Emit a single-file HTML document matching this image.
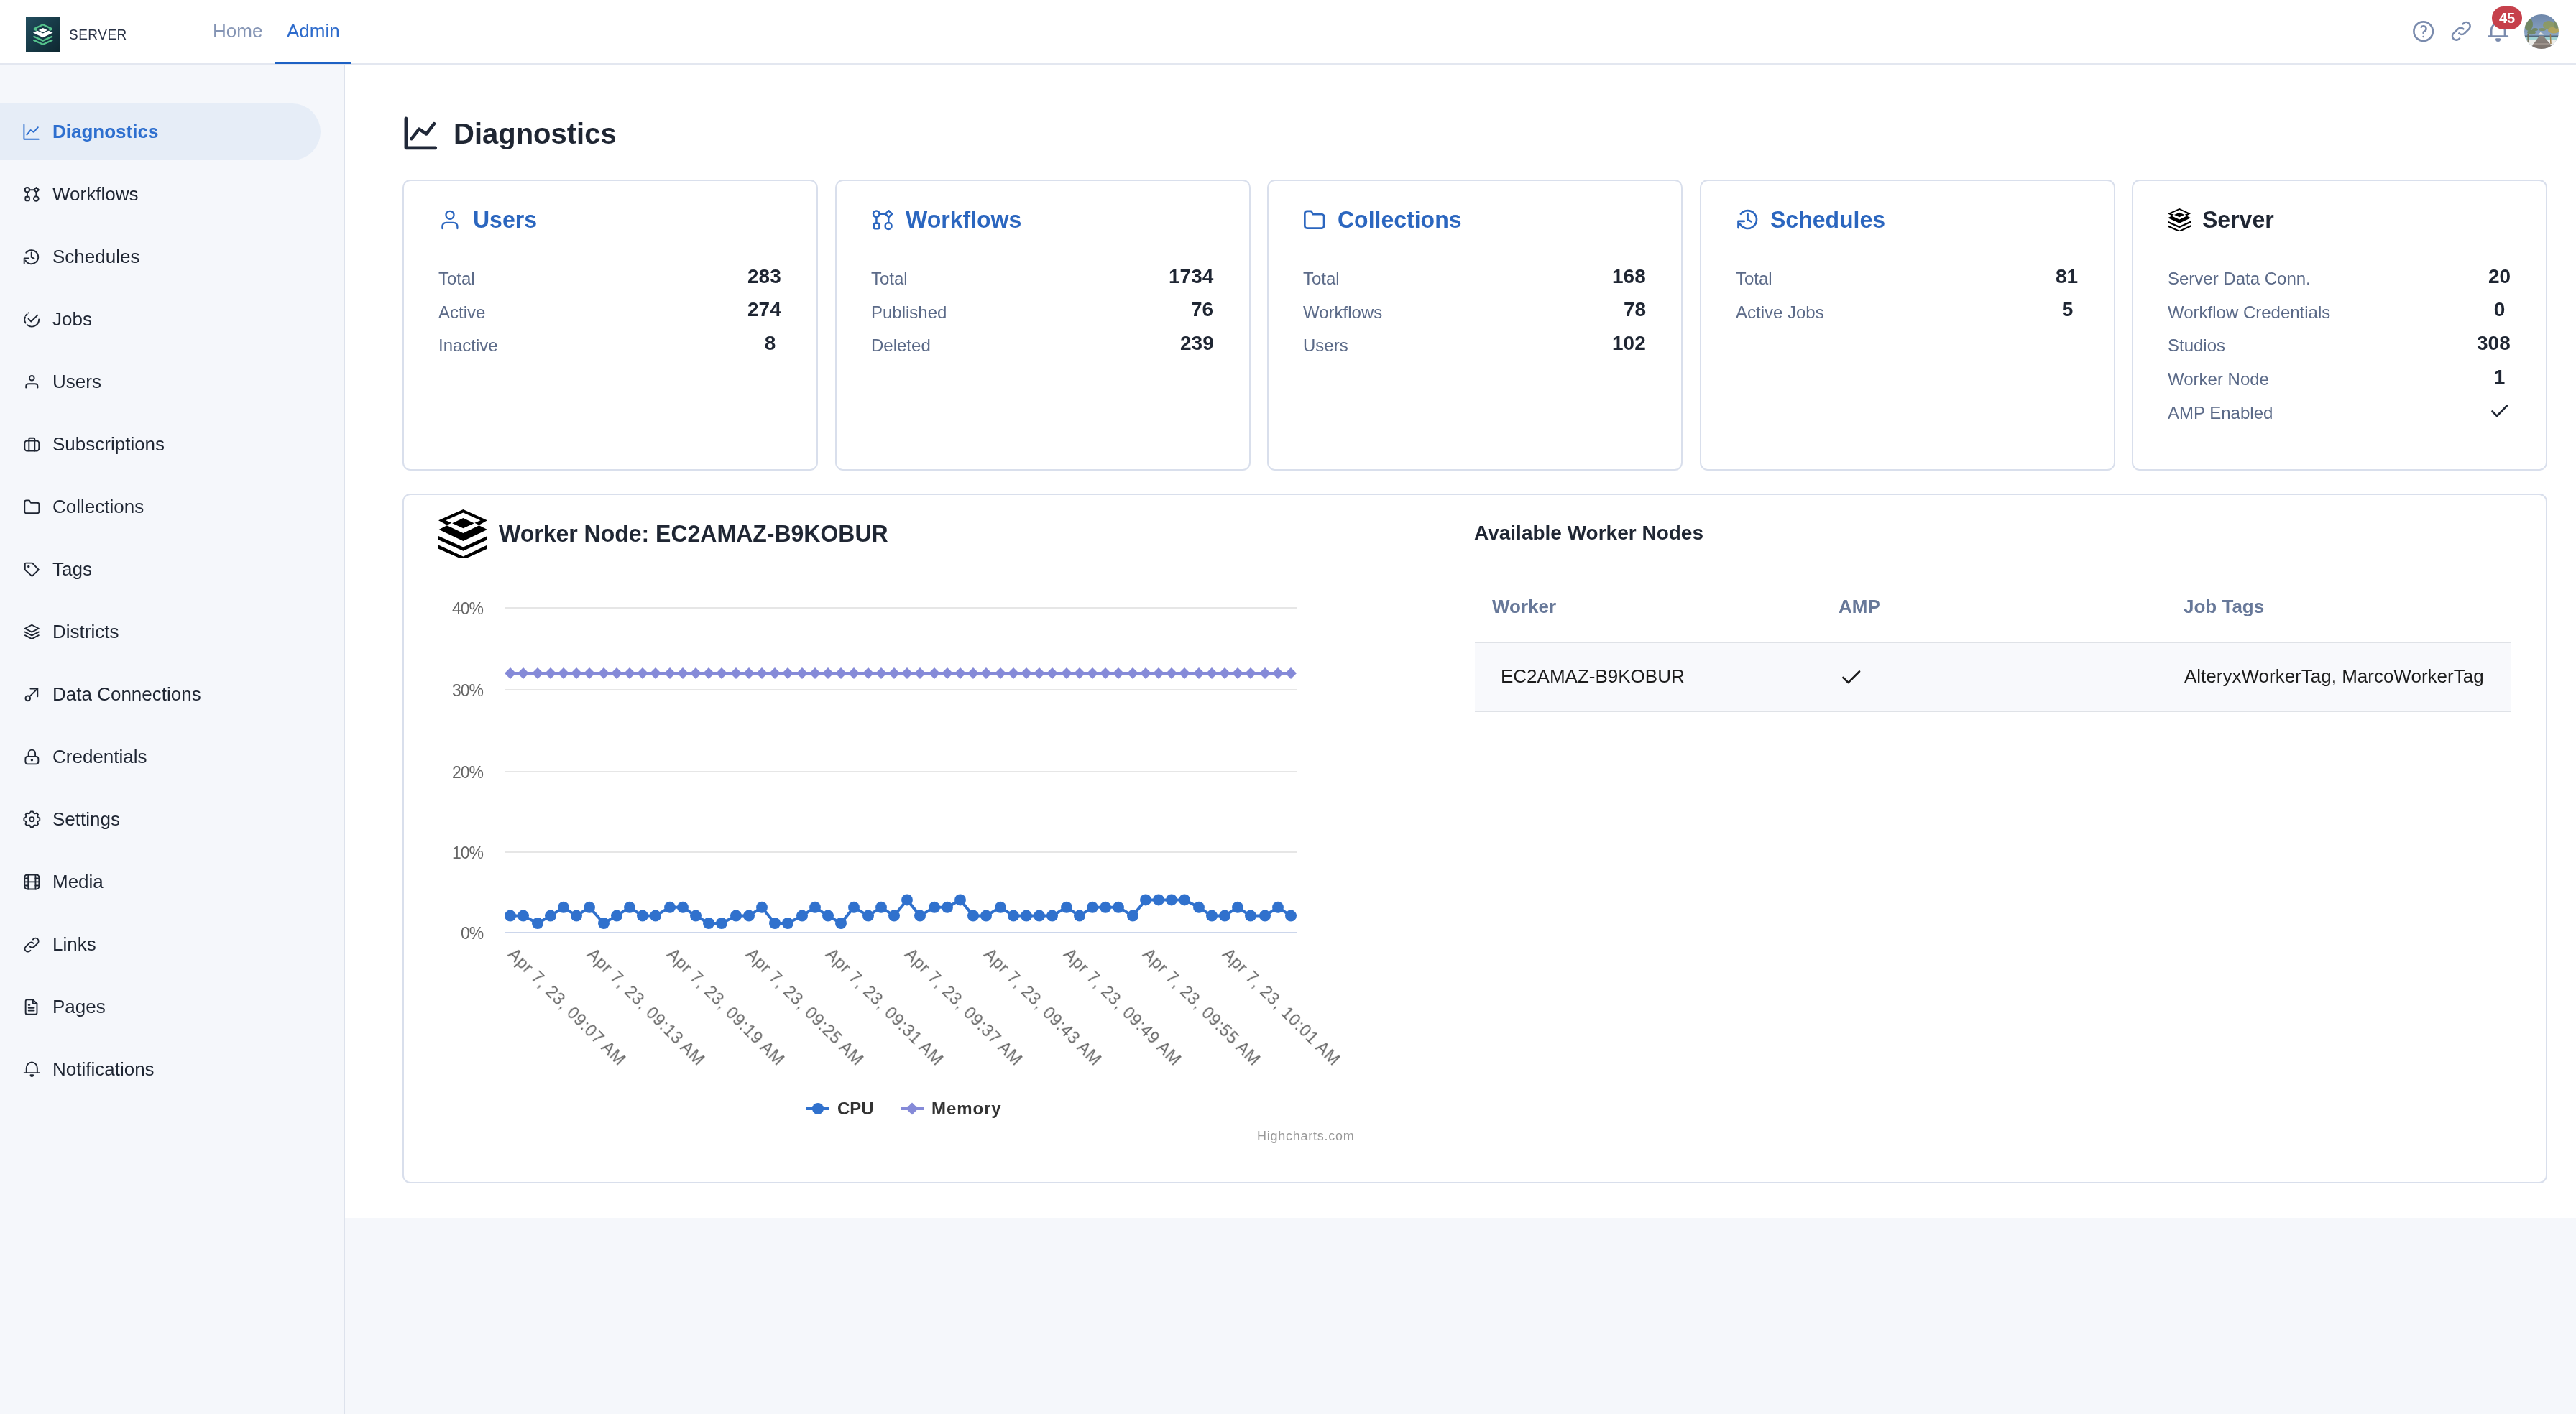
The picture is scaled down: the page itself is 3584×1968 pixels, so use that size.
<!DOCTYPE html>
<html><head><meta charset="utf-8"><title>Diagnostics</title>
<style>
html,body{margin:0;padding:0}
body{width:3584px;height:1968px;position:relative;overflow:hidden;background:#f5f7fb;font-family:"Liberation Sans",sans-serif}
@media (max-width:2600px){html{zoom:0.5}}
.t{position:absolute;white-space:nowrap;will-change:transform}
.r{position:absolute;display:block}
</style></head><body>

<div class="r" style="left:0px;top:0px;width:3584px;height:88px;background:#ffffff"></div>
<div class="r" style="left:0px;top:88px;width:3584px;height:2px;background:#e3e7f0"></div>
<div class="r" style="left:0px;top:90px;width:478px;height:1878px;background:#f5f7fb"></div>
<div class="r" style="left:478px;top:90px;width:2px;height:1878px;background:#dde2ec"></div>
<div class="r" style="left:480px;top:90px;width:3104px;height:1605px;background:#ffffff"></div>
<div class="r" style="left:36px;top:24px;width:48px;height:48px;background:linear-gradient(135deg,#224d5e 0%,#173a47 50%,#0e2730 100%)"></div>
<svg class="r" style="left:36px;top:24px;" width="48" height="48" viewBox="0 0 48 48">
<polygon points="10,21.6 23.8,15 37.6,21.6 23.8,28.2" fill="#ffffff"/>
<polygon points="11,16.2 23.8,10 36.6,16.2 23.8,22.6" fill="#173a47"/>
<polyline points="11.2,16.4 23.8,10.2 36.4,16.4" fill="none" stroke="#55c28c" stroke-width="2.3" stroke-linejoin="miter"/>
<polyline points="11.2,16.4 15,18.2" fill="none" stroke="#55c28c" stroke-width="2.3"/>
<polyline points="36.4,16.4 32.6,18.2" fill="none" stroke="#55c28c" stroke-width="2.3"/>
<polygon points="17.5,17.9 23.8,14.9 30.1,17.9 23.8,20.9" fill="#ffffff"/>
<polyline points="10.5,26.5 23.8,32.6 37.1,26.5" fill="none" stroke="#55c28c" stroke-width="2.4"/>
<polyline points="10.5,31.6 23.8,37.8 37.1,31.6" fill="none" stroke="#55c28c" stroke-width="2.4"/>
</svg>
<div class="t " style="left:96.00px;top:39.11px;font-size:19px;line-height:19px;color:#2a3346;font-weight:400;transform-origin:0 16.09px;transform:scaleY(1.02);letter-spacing:0.5px">SERVER</div>
<div class="t " style="left:296.00px;top:30.39px;font-size:26px;line-height:26px;color:#8494b4;font-weight:400;transform-origin:0 22.01px;transform:scaleY(1.02);">Home</div>
<div class="t " style="left:398.50px;top:30.39px;font-size:26px;line-height:26px;color:#2d6bcc;font-weight:400;transform-origin:0 22.01px;transform:scaleY(1.02);">Admin</div>
<div class="r" style="left:382px;top:86px;width:106px;height:3px;background:#1d61c4"></div>
<svg class="r" style="left:3354.36px;top:25.86px;" width="35.28" height="35.28" viewBox="0 0 24 24"><g fill="none" stroke="#7a8bad" stroke-width="1.769" stroke-linecap="round" stroke-linejoin="round" style="color:#7a8bad"><circle cx="12" cy="12" r="9"/><path d="M12 17l0 .01"/><path d="M12 13.5a1.5 1.5 0 0 1 1 -1.5a2.6 2.6 0 1 0 -3 -4"/></g></svg>
<svg class="r" style="left:3405.64px;top:25.14px;" width="36.72" height="36.72" viewBox="0 0 24 24"><g fill="none" stroke="#7a8bad" stroke-width="1.699" stroke-linecap="round" stroke-linejoin="round" style="color:#7a8bad"><path d="M10 14a3.5 3.5 0 0 0 5 0l4 -4a3.5 3.5 0 0 0 -5 -5l-.5 .5"/><path d="M14 10a3.5 3.5 0 0 0 -5 0l-4 4a3.5 3.5 0 0 0 5 5l.5 -.5"/></g></svg>
<svg class="r" style="left:3458.94px;top:28.44px;" width="33.12" height="33.12" viewBox="0 0 24 24"><g fill="none" stroke="#7a8bad" stroke-width="1.884" stroke-linecap="round" stroke-linejoin="round" style="color:#7a8bad"><path d="M5.2 16.3V10.3A6.8 7.2 0 0 1 18.8 10.3V16.3"/><path d="M2.4 16.3H21.6"/><path d="M10.4 19.2H13.6A1.6 1.6 0 0 1 10.4 19.2Z" fill="currentColor"/></g></svg>
<div class="r" style="left:3467px;top:9px;width:42px;height:32px;border-radius:16px;background:#c6404b"></div>
<div class="t " style="left:3488.00px;top:14.87px;font-size:20px;line-height:20px;color:#ffffff;font-weight:700;transform-origin:50% 16.93px;transform:translateX(-50%) scaleY(1.02);">45</div>
<svg class="r" style="left:3512px;top:20px;" width="48" height="48" viewBox="0 0 48 48">
<defs><clipPath id="avc"><circle cx="24" cy="24" r="24"/></clipPath>
<linearGradient id="avsky" x1="0" y1="0" x2="0" y2="1"><stop offset="0" stop-color="#6e87aa"/><stop offset="0.65" stop-color="#8ba6c6"/></linearGradient>
<linearGradient id="avpier" x1="0" y1="0" x2="0" y2="1"><stop offset="0" stop-color="#8d8580"/><stop offset="1" stop-color="#7c726c"/></linearGradient></defs>
<g clip-path="url(#avc)">
<rect x="0" y="0" width="48" height="48" fill="url(#avsky)"/>
<rect x="0" y="29.5" width="48" height="2.5" fill="#51687c"/>
<rect x="0" y="32" width="48" height="3" fill="#9fd2d2"/>
<rect x="0" y="35" width="48" height="13" fill="#ecedea"/>
<g fill="#6f8555" opacity="0.85"><ellipse cx="6" cy="14" rx="6" ry="9"/><ellipse cx="10" cy="25" rx="6" ry="3.2"/><ellipse cx="15" cy="21" rx="4" ry="2"/></g>
<rect x="4.4" y="28" width="1.5" height="12" fill="#6a6a55"/>
<g opacity="0.85"><ellipse cx="34" cy="15" rx="8" ry="6" fill="#8f9a5a"/><ellipse cx="41" cy="22" rx="8" ry="4.5" fill="#b9a54e"/><ellipse cx="25" cy="21" rx="5" ry="2" fill="#7f9060"/><ellipse cx="45" cy="14" rx="4" ry="6" fill="#7d8c58"/></g>
<path d="M35.6 27 L37 27 L37.8 41 L36.2 41Z" fill="#a0804e"/>
<path d="M19.6 28.4 L23.2 24 L27 28.4Z" fill="#e6e4dc"/>
<path d="M21 30 L26.5 30 L42 48 L8 48Z" fill="url(#avpier)"/>
<path d="M14 40 L34 40 L36 42 L12 42Z" fill="#9c918a"/>
</g></svg>
<div class="r" style="left:0px;top:144px;width:446px;height:79px;background:#e6edf7;border-radius:0 40px 40px 0"></div>
<div class="t " style="left:72.50px;top:170.19px;font-size:26px;line-height:26px;color:#2e6fcf;font-weight:700;transform-origin:0 22.01px;transform:scaleY(1.02);">Diagnostics</div>
<svg class="r" style="left:30.4px;top:170.1px;" width="27.19" height="27.19" viewBox="0 0 24 24"><g fill="none" stroke="#2e6fcf" stroke-width="1.677" stroke-linecap="round" stroke-linejoin="round" style="color:#2e6fcf"><path d="M3 3v18h18"/><path d="M6.5 15.5 L11.1 9.8 L15 12.2 L20.2 6.3"/></g></svg>
<div class="t " style="left:72.50px;top:257.19px;font-size:26px;line-height:26px;color:#1f2633;font-weight:400;transform-origin:0 22.01px;transform:scaleY(1.02);">Workflows</div>
<svg class="r" style="left:30.68px;top:257.38px;" width="26.64" height="26.64" viewBox="0 0 24 24"><g fill="none" stroke="#1f2633" stroke-width="1.712" stroke-linecap="round" stroke-linejoin="round" style="color:#1f2633"><circle cx="6.2" cy="6.5" r="2.85"/><path d="M17.7 3.5 L20.7 6.5 L17.7 9.5 L14.7 6.5Z"/><path d="M9.05 6.5H14.7"/><path d="M6.3 9.35V15.1"/><path d="M17.5 9.5V14.6"/><rect x="3.9" y="15.1" width="5" height="5" rx="1"/><circle cx="17.4" cy="17.65" r="3"/></g></svg>
<div class="t " style="left:72.50px;top:344.19px;font-size:26px;line-height:26px;color:#1f2633;font-weight:400;transform-origin:0 22.01px;transform:scaleY(1.02);">Schedules</div>
<svg class="r" style="left:31.28px;top:344.98px;" width="25.44" height="25.44" viewBox="0 0 24 24"><g fill="none" stroke="#1f2633" stroke-width="1.792" stroke-linecap="round" stroke-linejoin="round" style="color:#1f2633"><path d="M5 6.34A9 9 0 1 1 4.2 16.5"/><path d="M2.54 20.36V13.7H8.48"/><path d="M12 6.2V12.2L15.6 14"/></g></svg>
<div class="t " style="left:72.50px;top:431.19px;font-size:26px;line-height:26px;color:#1f2633;font-weight:400;transform-origin:0 22.01px;transform:scaleY(1.02);">Jobs</div>
<svg class="r" style="left:30.68px;top:431.38px;" width="26.64" height="26.64" viewBox="0 0 24 24"><g fill="none" stroke="#1f2633" stroke-width="1.712" stroke-linecap="round" stroke-linejoin="round" style="color:#1f2633"><path d="M7.86 3.98 L7.9 3.96"/><path d="M4.37 7.53 A9 9 0 0 1 5.98 5.61"/><path d="M3.02 11.67 A9 9 0 0 1 3.54 9.22"/><path d="M4.13 16.66 A9 9 0 0 1 3.23 14.32"/><path d="M6.0 19.0 A9 9 0 0 0 20.9 12.2"/><path d="M7.7 11.4L11.1 14.9L19.2 6.9"/></g></svg>
<div class="t " style="left:72.50px;top:518.19px;font-size:26px;line-height:26px;color:#1f2633;font-weight:400;transform-origin:0 22.01px;transform:scaleY(1.02);">Users</div>
<svg class="r" style="left:30.68px;top:518.38px;" width="26.64" height="26.64" viewBox="0 0 24 24"><g fill="none" stroke="#1f2633" stroke-width="1.712" stroke-linecap="round" stroke-linejoin="round" style="color:#1f2633"><circle cx="12" cy="7.5" r="3"/><path d="M4.7 19.4V17.7C4.7 15.7 5.9 14.6 8.1 14.6H15.9C18.1 14.6 19.3 15.7 19.3 17.7V19.4"/></g></svg>
<div class="t " style="left:72.50px;top:605.19px;font-size:26px;line-height:26px;color:#1f2633;font-weight:400;transform-origin:0 22.01px;transform:scaleY(1.02);">Subscriptions</div>
<svg class="r" style="left:30.68px;top:605.38px;" width="26.64" height="26.64" viewBox="0 0 24 24"><g fill="none" stroke="#1f2633" stroke-width="1.712" stroke-linecap="round" stroke-linejoin="round" style="color:#1f2633"><rect x="3" y="7.6" width="18" height="12.7" rx="3"/><path d="M8.4 20.3V7.6"/><path d="M15.6 20.3V7.6"/><path d="M8.4 7.6V5.6A1.3 1.3 0 0 1 9.7 4.3H14.3A1.3 1.3 0 0 1 15.6 5.6V7.6"/></g></svg>
<div class="t " style="left:72.50px;top:692.19px;font-size:26px;line-height:26px;color:#1f2633;font-weight:400;transform-origin:0 22.01px;transform:scaleY(1.02);">Collections</div>
<svg class="r" style="left:30.68px;top:692.38px;" width="26.64" height="26.64" viewBox="0 0 24 24"><g fill="none" stroke="#1f2633" stroke-width="1.712" stroke-linecap="round" stroke-linejoin="round" style="color:#1f2633"><path d="M5.2 3.94H8.94L10.74 6.92H18.8Q21.05 6.92 21.05 9.17V17.8Q21.05 20.06 18.8 20.06H5.2Q2.95 20.06 2.95 17.8V6.2Q2.95 3.94 5.2 3.94Z"/></g></svg>
<div class="t " style="left:72.50px;top:779.19px;font-size:26px;line-height:26px;color:#1f2633;font-weight:400;transform-origin:0 22.01px;transform:scaleY(1.02);">Tags</div>
<svg class="r" style="left:30.68px;top:779.38px;" width="26.64" height="26.64" viewBox="0 0 24 24"><g fill="none" stroke="#1f2633" stroke-width="1.712" stroke-linecap="round" stroke-linejoin="round" style="color:#1f2633"><circle cx="7.9" cy="8.5" r=".7" fill="currentColor"/><path d="M3.4 5.2V12.6L12.2 20.6L20.6 12.6L12.6 4.2H4.4A1 1 0 0 0 3.4 5.2Z"/></g></svg>
<div class="t " style="left:72.50px;top:866.19px;font-size:26px;line-height:26px;color:#1f2633;font-weight:400;transform-origin:0 22.01px;transform:scaleY(1.02);">Districts</div>
<svg class="r" style="left:30.68px;top:866.38px;" width="26.64" height="26.64" viewBox="0 0 24 24"><g fill="none" stroke="#1f2633" stroke-width="1.712" stroke-linecap="round" stroke-linejoin="round" style="color:#1f2633"><path d="M12 3.4L20.6 7.9L12 12.2L3.4 7.9Z"/><path d="M3.4 12.2L12 16.6L20.6 12.2"/><path d="M3.4 16.4L12 20.8L20.6 16.4"/></g></svg>
<div class="t " style="left:72.50px;top:953.19px;font-size:26px;line-height:26px;color:#1f2633;font-weight:400;transform-origin:0 22.01px;transform:scaleY(1.02);">Data Connections</div>
<svg class="r" style="left:30.68px;top:953.38px;" width="26.64" height="26.64" viewBox="0 0 24 24"><g fill="none" stroke="#1f2633" stroke-width="1.712" stroke-linecap="round" stroke-linejoin="round" style="color:#1f2633"><circle cx="7" cy="17" r="3"/><path d="M9.2 14.8L19.2 4.9"/><path d="M10.3 4.9H19.2V14.6"/></g></svg>
<div class="t " style="left:72.50px;top:1040.19px;font-size:26px;line-height:26px;color:#1f2633;font-weight:400;transform-origin:0 22.01px;transform:scaleY(1.02);">Credentials</div>
<svg class="r" style="left:30.68px;top:1040.38px;" width="26.64" height="26.64" viewBox="0 0 24 24"><g fill="none" stroke="#1f2633" stroke-width="1.712" stroke-linecap="round" stroke-linejoin="round" style="color:#1f2633"><rect x="3.95" y="11.7" width="16.2" height="9.4" rx="2.8"/><circle cx="12.07" cy="16" r=".7" fill="currentColor"/><path d="M7.8 11.7V7.55A4.25 4.25 0 0 1 16.3 7.55V11.7"/></g></svg>
<div class="t " style="left:72.50px;top:1127.19px;font-size:26px;line-height:26px;color:#1f2633;font-weight:400;transform-origin:0 22.01px;transform:scaleY(1.02);">Settings</div>
<svg class="r" style="left:30.68px;top:1127.38px;" width="26.64" height="26.64" viewBox="0 0 24 24"><g fill="none" stroke="#1f2633" stroke-width="1.712" stroke-linecap="round" stroke-linejoin="round" style="color:#1f2633"><path d="M10.62 2.20 A9.9 9.9 0 0 1 13.38 2.20 Q14.45 6.09 17.96 4.09 A9.9 9.9 0 0 1 19.91 6.04 Q17.91 9.55 21.80 10.62 A9.9 9.9 0 0 1 21.80 13.38 Q17.91 14.45 19.91 17.96 A9.9 9.9 0 0 1 17.96 19.91 Q14.45 17.91 13.38 21.80 A9.9 9.9 0 0 1 10.62 21.80 Q9.55 17.91 6.04 19.91 A9.9 9.9 0 0 1 4.09 17.96 Q6.09 14.45 2.20 13.38 A9.9 9.9 0 0 1 2.20 10.62 Q6.09 9.55 4.09 6.04 A9.9 9.9 0 0 1 6.04 4.09 Q9.55 6.09 10.62 2.20Z"/><circle cx="12" cy="12" r="2.7"/></g></svg>
<div class="t " style="left:72.50px;top:1214.19px;font-size:26px;line-height:26px;color:#1f2633;font-weight:400;transform-origin:0 22.01px;transform:scaleY(1.02);">Media</div>
<svg class="r" style="left:30.68px;top:1214.38px;" width="26.64" height="26.64" viewBox="0 0 24 24"><g fill="none" stroke="#1f2633" stroke-width="1.712" stroke-linecap="round" stroke-linejoin="round" style="color:#1f2633"><rect x="2.95" y="3.1" width="18.1" height="18.1" rx="3.3"/><path d="M7.44 3.1V21.2"/><path d="M16.6 3.1V21.2"/><path d="M2.95 7.6H7.44"/><path d="M2.95 16.7H7.44"/><path d="M2.95 12.1H21.05"/><path d="M16.6 7.6H21.05"/><path d="M16.6 16.7H21.05"/></g></svg>
<div class="t " style="left:72.50px;top:1301.19px;font-size:26px;line-height:26px;color:#1f2633;font-weight:400;transform-origin:0 22.01px;transform:scaleY(1.02);">Links</div>
<svg class="r" style="left:29.84px;top:1300.54px;" width="28.32" height="28.32" viewBox="0 0 24 24"><g fill="none" stroke="#1f2633" stroke-width="1.610" stroke-linecap="round" stroke-linejoin="round" style="color:#1f2633"><path d="M10 14a3.5 3.5 0 0 0 5 0l4 -4a3.5 3.5 0 0 0 -5 -5l-.5 .5"/><path d="M14 10a3.5 3.5 0 0 0 -5 0l-4 4a3.5 3.5 0 0 0 5 5l.5 -.5"/></g></svg>
<div class="t " style="left:72.50px;top:1388.19px;font-size:26px;line-height:26px;color:#1f2633;font-weight:400;transform-origin:0 22.01px;transform:scaleY(1.02);">Pages</div>
<svg class="r" style="left:30.44px;top:1388.14px;" width="27.12" height="27.12" viewBox="0 0 24 24"><g fill="none" stroke="#1f2633" stroke-width="1.681" stroke-linecap="round" stroke-linejoin="round" style="color:#1f2633"><path d="M14 3v4a1 1 0 0 0 1 1h4"/><path d="M17 21h-10a2 2 0 0 1 -2 -2v-14a2 2 0 0 1 2 -2h7l5 5v11a2 2 0 0 1 -2 2z"/><path d="M8.6 9.6H10.1"/><path d="M8.6 13.06H15.5"/><path d="M8.6 16.47H15.5"/></g></svg>
<div class="t " style="left:72.50px;top:1475.19px;font-size:26px;line-height:26px;color:#1f2633;font-weight:400;transform-origin:0 22.01px;transform:scaleY(1.02);">Notifications</div>
<svg class="r" style="left:30.68px;top:1475.38px;" width="26.64" height="26.64" viewBox="0 0 24 24"><g fill="none" stroke="#1f2633" stroke-width="1.712" stroke-linecap="round" stroke-linejoin="round" style="color:#1f2633"><path d="M5.2 16.3V10.3A6.8 7.2 0 0 1 18.8 10.3V16.3"/><path d="M2.4 16.3H21.6"/><path d="M10.4 19.2H13.6A1.6 1.6 0 0 1 10.4 19.2Z" fill="currentColor"/></g></svg>
<svg class="r" style="left:557.7px;top:157.6px;" width="54.7" height="54.7" viewBox="0 0 24 24"><g fill="none" stroke="#202838" stroke-width="2" stroke-linecap="round" stroke-linejoin="round"><path d="M3 3v18h18"/><path d="M6.4 15.4 L11 9.5 L15.5 12.5 L20.2 6.2"/></g></svg>
<div class="t " style="left:630.50px;top:166.13px;font-size:40px;line-height:40px;color:#1f2633;font-weight:700;transform-origin:0 33.87px;transform:scaleY(1.02);">Diagnostics</div>
<div class="r" style="left:560.0px;top:250px;width:578px;height:405px;box-sizing:border-box;border:2px solid #d9dfec;border-radius:11px;background:#fff"></div>
<svg class="r" style="left:600.0px;top:280px;" width="60" height="50" viewBox="600 280 60 50"><g fill="none" stroke="#2b66bf" stroke-width="2.3" stroke-linecap="round" stroke-linejoin="round"><circle cx="626" cy="299.3" r="5.5"/><path d="M615.4 318V315.8C615.4 312.2 617.4 309.9 621.2 309.9H630.6C634.4 309.9 636.4 312.2 636.4 315.8V318"/></g></svg>
<div class="t " style="left:658.00px;top:290.41px;font-size:32px;line-height:32px;color:#2b66bf;font-weight:700;transform-origin:0 27.09px;transform:scaleY(1.02);">Users</div>
<div class="t " style="left:610.00px;top:375.88px;font-size:24px;line-height:24px;color:#5b6a88;font-weight:400;transform-origin:0 20.32px;transform:scaleY(1.02);">Total</div>
<div class="t " style="right:2497.00px;top:370.69px;font-size:28px;line-height:28px;color:#1f2633;font-weight:700;transform-origin:0 23.71px;transform:scaleY(1.02);min-width:31px;text-align:center">283</div>
<div class="t " style="left:610.00px;top:422.58px;font-size:24px;line-height:24px;color:#5b6a88;font-weight:400;transform-origin:0 20.32px;transform:scaleY(1.02);">Active</div>
<div class="t " style="right:2497.00px;top:417.39px;font-size:28px;line-height:28px;color:#1f2633;font-weight:700;transform-origin:0 23.71px;transform:scaleY(1.02);min-width:31px;text-align:center">274</div>
<div class="t " style="left:610.00px;top:469.28px;font-size:24px;line-height:24px;color:#5b6a88;font-weight:400;transform-origin:0 20.32px;transform:scaleY(1.02);">Inactive</div>
<div class="t " style="right:2497.00px;top:464.09px;font-size:28px;line-height:28px;color:#1f2633;font-weight:700;transform-origin:0 23.71px;transform:scaleY(1.02);min-width:31px;text-align:center">8</div>
<div class="r" style="left:1161.5px;top:250px;width:578px;height:405px;box-sizing:border-box;border:2px solid #d9dfec;border-radius:11px;background:#fff"></div>
<svg class="r" style="left:1210.0px;top:288.0px;" width="36.0" height="36.0" viewBox="0 0 24 24"><g fill="none" stroke="#2b66bf" stroke-width="1.667" stroke-linecap="round" stroke-linejoin="round" style="color:#2b66bf"><circle cx="6.2" cy="6.5" r="2.85"/><path d="M17.7 3.5 L20.7 6.5 L17.7 9.5 L14.7 6.5Z"/><path d="M9.05 6.5H14.7"/><path d="M6.3 9.35V15.1"/><path d="M17.5 9.5V14.6"/><rect x="3.9" y="15.1" width="5" height="5" rx="1"/><circle cx="17.4" cy="17.65" r="3"/></g></svg>
<div class="t " style="left:1259.50px;top:290.41px;font-size:32px;line-height:32px;color:#2b66bf;font-weight:700;transform-origin:0 27.09px;transform:scaleY(1.02);">Workflows</div>
<div class="t " style="left:1211.50px;top:375.88px;font-size:24px;line-height:24px;color:#5b6a88;font-weight:400;transform-origin:0 20.32px;transform:scaleY(1.02);">Total</div>
<div class="t " style="right:1895.50px;top:370.69px;font-size:28px;line-height:28px;color:#1f2633;font-weight:700;transform-origin:0 23.71px;transform:scaleY(1.02);min-width:31px;text-align:center">1734</div>
<div class="t " style="left:1211.50px;top:422.58px;font-size:24px;line-height:24px;color:#5b6a88;font-weight:400;transform-origin:0 20.32px;transform:scaleY(1.02);">Published</div>
<div class="t " style="right:1895.50px;top:417.39px;font-size:28px;line-height:28px;color:#1f2633;font-weight:700;transform-origin:0 23.71px;transform:scaleY(1.02);min-width:31px;text-align:center">76</div>
<div class="t " style="left:1211.50px;top:469.28px;font-size:24px;line-height:24px;color:#5b6a88;font-weight:400;transform-origin:0 20.32px;transform:scaleY(1.02);">Deleted</div>
<div class="t " style="right:1895.50px;top:464.09px;font-size:28px;line-height:28px;color:#1f2633;font-weight:700;transform-origin:0 23.71px;transform:scaleY(1.02);min-width:31px;text-align:center">239</div>
<div class="r" style="left:1763.0px;top:250px;width:578px;height:405px;box-sizing:border-box;border:2px solid #d9dfec;border-radius:11px;background:#fff"></div>
<svg class="r" style="left:1811.35px;top:288.2px;" width="35.4" height="35.4" viewBox="0 0 24 24"><g fill="none" stroke="#2b66bf" stroke-width="1.797" stroke-linecap="round" stroke-linejoin="round" style="color:#2b66bf"><path d="M5.2 3.94H8.94L10.74 6.92H18.8Q21.05 6.92 21.05 9.17V17.8Q21.05 20.06 18.8 20.06H5.2Q2.95 20.06 2.95 17.8V6.2Q2.95 3.94 5.2 3.94Z"/></g></svg>
<div class="t " style="left:1861.00px;top:290.41px;font-size:32px;line-height:32px;color:#2b66bf;font-weight:700;transform-origin:0 27.09px;transform:scaleY(1.02);">Collections</div>
<div class="t " style="left:1813.00px;top:375.88px;font-size:24px;line-height:24px;color:#5b6a88;font-weight:400;transform-origin:0 20.32px;transform:scaleY(1.02);">Total</div>
<div class="t " style="right:1294.00px;top:370.69px;font-size:28px;line-height:28px;color:#1f2633;font-weight:700;transform-origin:0 23.71px;transform:scaleY(1.02);min-width:31px;text-align:center">168</div>
<div class="t " style="left:1813.00px;top:422.58px;font-size:24px;line-height:24px;color:#5b6a88;font-weight:400;transform-origin:0 20.32px;transform:scaleY(1.02);">Workflows</div>
<div class="t " style="right:1294.00px;top:417.39px;font-size:28px;line-height:28px;color:#1f2633;font-weight:700;transform-origin:0 23.71px;transform:scaleY(1.02);min-width:31px;text-align:center">78</div>
<div class="t " style="left:1813.00px;top:469.28px;font-size:24px;line-height:24px;color:#5b6a88;font-weight:400;transform-origin:0 20.32px;transform:scaleY(1.02);">Users</div>
<div class="t " style="right:1294.00px;top:464.09px;font-size:28px;line-height:28px;color:#1f2633;font-weight:700;transform-origin:0 23.71px;transform:scaleY(1.02);min-width:31px;text-align:center">102</div>
<div class="r" style="left:2364.5px;top:250px;width:578px;height:405px;box-sizing:border-box;border:2px solid #d9dfec;border-radius:11px;background:#fff"></div>
<svg class="r" style="left:2414.94px;top:289.44px;" width="33.12" height="33.12" viewBox="0 0 24 24"><g fill="none" stroke="#2b66bf" stroke-width="1.920" stroke-linecap="round" stroke-linejoin="round" style="color:#2b66bf"><path d="M5 6.34A9 9 0 1 1 4.2 16.5"/><path d="M2.54 20.36V13.7H8.48"/><path d="M12 6.2V12.2L15.6 14"/></g></svg>
<div class="t " style="left:2462.50px;top:290.41px;font-size:32px;line-height:32px;color:#2b66bf;font-weight:700;transform-origin:0 27.09px;transform:scaleY(1.02);">Schedules</div>
<div class="t " style="left:2414.50px;top:375.88px;font-size:24px;line-height:24px;color:#5b6a88;font-weight:400;transform-origin:0 20.32px;transform:scaleY(1.02);">Total</div>
<div class="t " style="right:692.50px;top:370.69px;font-size:28px;line-height:28px;color:#1f2633;font-weight:700;transform-origin:0 23.71px;transform:scaleY(1.02);min-width:31px;text-align:center">81</div>
<div class="t " style="left:2414.50px;top:422.58px;font-size:24px;line-height:24px;color:#5b6a88;font-weight:400;transform-origin:0 20.32px;transform:scaleY(1.02);">Active Jobs</div>
<div class="t " style="right:692.50px;top:417.39px;font-size:28px;line-height:28px;color:#1f2633;font-weight:700;transform-origin:0 23.71px;transform:scaleY(1.02);min-width:31px;text-align:center">5</div>
<div class="r" style="left:2966.0px;top:250px;width:578px;height:405px;box-sizing:border-box;border:2px solid #d9dfec;border-radius:11px;background:#fff"></div>
<svg class="r" style="left:3016.0px;top:290px;" width="32" height="32" viewBox="0 0 100 100"><g fill="#000000"><polygon points="0,22.5 50.7,0 100,22.5 83.1,31.9 74,27.6 86,22.5 50.7,6.6 15,22.5 27,27.6 17.4,31.9"/><polygon points="28.2,28.2 50.7,17.8 73.2,28.2 50.7,38.6"/><polygon points="1,41.3 17.4,32.6 50.7,48.4 83.1,32.6 100,41.3 50.7,64.8"/><polygon points="0,54.5 50.7,77.2 100,54.5 100,62.2 50.7,85 0,62.2"/><polygon points="0,72.8 50.7,96.2 100,72.8 100,80.6 57,100 44,100 0,80.6"/></g></svg>
<div class="t " style="left:3064.00px;top:290.41px;font-size:32px;line-height:32px;color:#1f2633;font-weight:700;transform-origin:0 27.09px;transform:scaleY(1.02);">Server</div>
<div class="t " style="left:3016.00px;top:375.88px;font-size:24px;line-height:24px;color:#5b6a88;font-weight:400;transform-origin:0 20.32px;transform:scaleY(1.02);">Server Data Conn.</div>
<div class="t " style="right:91.00px;top:370.69px;font-size:28px;line-height:28px;color:#1f2633;font-weight:700;transform-origin:0 23.71px;transform:scaleY(1.02);min-width:31px;text-align:center">20</div>
<div class="t " style="left:3016.00px;top:422.58px;font-size:24px;line-height:24px;color:#5b6a88;font-weight:400;transform-origin:0 20.32px;transform:scaleY(1.02);">Workflow Credentials</div>
<div class="t " style="right:91.00px;top:417.39px;font-size:28px;line-height:28px;color:#1f2633;font-weight:700;transform-origin:0 23.71px;transform:scaleY(1.02);min-width:31px;text-align:center">0</div>
<div class="t " style="left:3016.00px;top:469.28px;font-size:24px;line-height:24px;color:#5b6a88;font-weight:400;transform-origin:0 20.32px;transform:scaleY(1.02);">Studios</div>
<div class="t " style="right:91.00px;top:464.09px;font-size:28px;line-height:28px;color:#1f2633;font-weight:700;transform-origin:0 23.71px;transform:scaleY(1.02);min-width:31px;text-align:center">308</div>
<div class="t " style="left:3016.00px;top:515.98px;font-size:24px;line-height:24px;color:#5b6a88;font-weight:400;transform-origin:0 20.32px;transform:scaleY(1.02);">Worker Node</div>
<div class="t " style="right:91.00px;top:510.79px;font-size:28px;line-height:28px;color:#1f2633;font-weight:700;transform-origin:0 23.71px;transform:scaleY(1.02);min-width:31px;text-align:center">1</div>
<div class="t " style="left:3016.00px;top:562.68px;font-size:24px;line-height:24px;color:#5b6a88;font-weight:400;transform-origin:0 20.32px;transform:scaleY(1.02);">AMP Enabled</div>
<svg class="r" style="left:3463.6px;top:560.4px;" width="28" height="24" viewBox="0 0 28 24"><path d="M3.5 12.5 L10 19 L24 4.5" fill="none" stroke="#1f2633" stroke-width="2.6" stroke-linecap="round" stroke-linejoin="round"/></svg>
<div class="r" style="left:560px;top:687px;width:2984px;height:960px;box-sizing:border-box;border:2px solid #d9dfec;border-radius:11px;background:#fff"></div>
<svg class="r" style="left:610px;top:709px;" width="68" height="68" viewBox="0 0 100 100"><g fill="#000000"><polygon points="0,22.5 50.7,0 100,22.5 83.1,31.9 74,27.6 86,22.5 50.7,6.6 15,22.5 27,27.6 17.4,31.9"/><polygon points="28.2,28.2 50.7,17.8 73.2,28.2 50.7,38.6"/><polygon points="1,41.3 17.4,32.6 50.7,48.4 83.1,32.6 100,41.3 50.7,64.8"/><polygon points="0,54.5 50.7,77.2 100,54.5 100,62.2 50.7,85 0,62.2"/><polygon points="0,72.8 50.7,96.2 100,72.8 100,80.6 57,100 44,100 0,80.6"/></g></svg>
<div class="t " style="left:694.00px;top:726.91px;font-size:32px;line-height:32px;color:#1f2633;font-weight:700;transform-origin:0 27.09px;transform:scaleY(1.02);">Worker Node: EC2AMAZ-B9KOBUR</div>
<div class="r" style="left:702px;top:1297px;width:1103px;height:2px;background:#ccd6eb"></div>
<div class="t " style="right:2912.00px;top:1288.03px;font-size:23px;line-height:23px;color:#666666;font-weight:400;transform-origin:0 19.47px;transform:scaleY(1.02);letter-spacing:-1px">0%</div>
<div class="r" style="left:702px;top:1185px;width:1103px;height:2px;background:#e6e6e6"></div>
<div class="t " style="right:2912.00px;top:1176.03px;font-size:23px;line-height:23px;color:#666666;font-weight:400;transform-origin:0 19.47px;transform:scaleY(1.02);letter-spacing:-1px">10%</div>
<div class="r" style="left:702px;top:1073px;width:1103px;height:2px;background:#e6e6e6"></div>
<div class="t " style="right:2912.00px;top:1064.03px;font-size:23px;line-height:23px;color:#666666;font-weight:400;transform-origin:0 19.47px;transform:scaleY(1.02);letter-spacing:-1px">20%</div>
<div class="r" style="left:702px;top:959px;width:1103px;height:2px;background:#e6e6e6"></div>
<div class="t " style="right:2912.00px;top:950.03px;font-size:23px;line-height:23px;color:#666666;font-weight:400;transform-origin:0 19.47px;transform:scaleY(1.02);letter-spacing:-1px">30%</div>
<div class="r" style="left:702px;top:845px;width:1103px;height:2px;background:#e6e6e6"></div>
<div class="t " style="right:2912.00px;top:836.03px;font-size:23px;line-height:23px;color:#666666;font-weight:400;transform-origin:0 19.47px;transform:scaleY(1.02);letter-spacing:-1px">40%</div>
<svg class="r" style="left:0px;top:0px;pointer-events:none" width="3584" height="1968" viewBox="0 0 3584 1968"><polyline points="710.0,937.0 728.0,937.0 748.0,937.0 766.0,937.0 784.0,937.0 802.0,937.0 820.0,937.0 840.0,937.0 858.0,937.0 876.0,937.0 894.0,937.0 912.0,937.0 932.0,937.0 950.0,937.0 968.0,937.0 986.0,937.0 1004.0,937.0 1024.0,937.0 1042.0,937.0 1060.0,937.0 1078.0,937.0 1096.0,937.0 1116.0,937.0 1134.0,937.0 1152.0,937.0 1170.0,937.0 1188.0,937.0 1208.0,937.0 1226.0,937.0 1244.0,937.0 1262.0,937.0 1280.0,937.0 1300.0,937.0 1318.0,937.0 1336.0,937.0 1354.0,937.0 1372.0,937.0 1392.0,937.0 1410.0,937.0 1428.0,937.0 1446.0,937.0 1464.0,937.0 1484.0,937.0 1502.0,937.0 1520.0,937.0 1538.0,937.0 1556.0,937.0 1576.0,937.0 1594.0,937.0 1612.0,937.0 1630.0,937.0 1648.0,937.0 1668.0,937.0 1686.0,937.0 1704.0,937.0 1722.0,937.0 1740.0,937.0 1760.0,937.0 1778.0,937.0 1796.0,937.0" fill="none" stroke="#858ad8" stroke-width="4"/><polygon points="710.0,929.0 718.0,937.0 710.0,945.0 702.0,937.0" fill="#858ad8"/><polygon points="728.0,929.0 736.0,937.0 728.0,945.0 720.0,937.0" fill="#858ad8"/><polygon points="748.0,929.0 756.0,937.0 748.0,945.0 740.0,937.0" fill="#858ad8"/><polygon points="766.0,929.0 774.0,937.0 766.0,945.0 758.0,937.0" fill="#858ad8"/><polygon points="784.0,929.0 792.0,937.0 784.0,945.0 776.0,937.0" fill="#858ad8"/><polygon points="802.0,929.0 810.0,937.0 802.0,945.0 794.0,937.0" fill="#858ad8"/><polygon points="820.0,929.0 828.0,937.0 820.0,945.0 812.0,937.0" fill="#858ad8"/><polygon points="840.0,929.0 848.0,937.0 840.0,945.0 832.0,937.0" fill="#858ad8"/><polygon points="858.0,929.0 866.0,937.0 858.0,945.0 850.0,937.0" fill="#858ad8"/><polygon points="876.0,929.0 884.0,937.0 876.0,945.0 868.0,937.0" fill="#858ad8"/><polygon points="894.0,929.0 902.0,937.0 894.0,945.0 886.0,937.0" fill="#858ad8"/><polygon points="912.0,929.0 920.0,937.0 912.0,945.0 904.0,937.0" fill="#858ad8"/><polygon points="932.0,929.0 940.0,937.0 932.0,945.0 924.0,937.0" fill="#858ad8"/><polygon points="950.0,929.0 958.0,937.0 950.0,945.0 942.0,937.0" fill="#858ad8"/><polygon points="968.0,929.0 976.0,937.0 968.0,945.0 960.0,937.0" fill="#858ad8"/><polygon points="986.0,929.0 994.0,937.0 986.0,945.0 978.0,937.0" fill="#858ad8"/><polygon points="1004.0,929.0 1012.0,937.0 1004.0,945.0 996.0,937.0" fill="#858ad8"/><polygon points="1024.0,929.0 1032.0,937.0 1024.0,945.0 1016.0,937.0" fill="#858ad8"/><polygon points="1042.0,929.0 1050.0,937.0 1042.0,945.0 1034.0,937.0" fill="#858ad8"/><polygon points="1060.0,929.0 1068.0,937.0 1060.0,945.0 1052.0,937.0" fill="#858ad8"/><polygon points="1078.0,929.0 1086.0,937.0 1078.0,945.0 1070.0,937.0" fill="#858ad8"/><polygon points="1096.0,929.0 1104.0,937.0 1096.0,945.0 1088.0,937.0" fill="#858ad8"/><polygon points="1116.0,929.0 1124.0,937.0 1116.0,945.0 1108.0,937.0" fill="#858ad8"/><polygon points="1134.0,929.0 1142.0,937.0 1134.0,945.0 1126.0,937.0" fill="#858ad8"/><polygon points="1152.0,929.0 1160.0,937.0 1152.0,945.0 1144.0,937.0" fill="#858ad8"/><polygon points="1170.0,929.0 1178.0,937.0 1170.0,945.0 1162.0,937.0" fill="#858ad8"/><polygon points="1188.0,929.0 1196.0,937.0 1188.0,945.0 1180.0,937.0" fill="#858ad8"/><polygon points="1208.0,929.0 1216.0,937.0 1208.0,945.0 1200.0,937.0" fill="#858ad8"/><polygon points="1226.0,929.0 1234.0,937.0 1226.0,945.0 1218.0,937.0" fill="#858ad8"/><polygon points="1244.0,929.0 1252.0,937.0 1244.0,945.0 1236.0,937.0" fill="#858ad8"/><polygon points="1262.0,929.0 1270.0,937.0 1262.0,945.0 1254.0,937.0" fill="#858ad8"/><polygon points="1280.0,929.0 1288.0,937.0 1280.0,945.0 1272.0,937.0" fill="#858ad8"/><polygon points="1300.0,929.0 1308.0,937.0 1300.0,945.0 1292.0,937.0" fill="#858ad8"/><polygon points="1318.0,929.0 1326.0,937.0 1318.0,945.0 1310.0,937.0" fill="#858ad8"/><polygon points="1336.0,929.0 1344.0,937.0 1336.0,945.0 1328.0,937.0" fill="#858ad8"/><polygon points="1354.0,929.0 1362.0,937.0 1354.0,945.0 1346.0,937.0" fill="#858ad8"/><polygon points="1372.0,929.0 1380.0,937.0 1372.0,945.0 1364.0,937.0" fill="#858ad8"/><polygon points="1392.0,929.0 1400.0,937.0 1392.0,945.0 1384.0,937.0" fill="#858ad8"/><polygon points="1410.0,929.0 1418.0,937.0 1410.0,945.0 1402.0,937.0" fill="#858ad8"/><polygon points="1428.0,929.0 1436.0,937.0 1428.0,945.0 1420.0,937.0" fill="#858ad8"/><polygon points="1446.0,929.0 1454.0,937.0 1446.0,945.0 1438.0,937.0" fill="#858ad8"/><polygon points="1464.0,929.0 1472.0,937.0 1464.0,945.0 1456.0,937.0" fill="#858ad8"/><polygon points="1484.0,929.0 1492.0,937.0 1484.0,945.0 1476.0,937.0" fill="#858ad8"/><polygon points="1502.0,929.0 1510.0,937.0 1502.0,945.0 1494.0,937.0" fill="#858ad8"/><polygon points="1520.0,929.0 1528.0,937.0 1520.0,945.0 1512.0,937.0" fill="#858ad8"/><polygon points="1538.0,929.0 1546.0,937.0 1538.0,945.0 1530.0,937.0" fill="#858ad8"/><polygon points="1556.0,929.0 1564.0,937.0 1556.0,945.0 1548.0,937.0" fill="#858ad8"/><polygon points="1576.0,929.0 1584.0,937.0 1576.0,945.0 1568.0,937.0" fill="#858ad8"/><polygon points="1594.0,929.0 1602.0,937.0 1594.0,945.0 1586.0,937.0" fill="#858ad8"/><polygon points="1612.0,929.0 1620.0,937.0 1612.0,945.0 1604.0,937.0" fill="#858ad8"/><polygon points="1630.0,929.0 1638.0,937.0 1630.0,945.0 1622.0,937.0" fill="#858ad8"/><polygon points="1648.0,929.0 1656.0,937.0 1648.0,945.0 1640.0,937.0" fill="#858ad8"/><polygon points="1668.0,929.0 1676.0,937.0 1668.0,945.0 1660.0,937.0" fill="#858ad8"/><polygon points="1686.0,929.0 1694.0,937.0 1686.0,945.0 1678.0,937.0" fill="#858ad8"/><polygon points="1704.0,929.0 1712.0,937.0 1704.0,945.0 1696.0,937.0" fill="#858ad8"/><polygon points="1722.0,929.0 1730.0,937.0 1722.0,945.0 1714.0,937.0" fill="#858ad8"/><polygon points="1740.0,929.0 1748.0,937.0 1740.0,945.0 1732.0,937.0" fill="#858ad8"/><polygon points="1760.0,929.0 1768.0,937.0 1760.0,945.0 1752.0,937.0" fill="#858ad8"/><polygon points="1778.0,929.0 1786.0,937.0 1778.0,945.0 1770.0,937.0" fill="#858ad8"/><polygon points="1796.0,929.0 1804.0,937.0 1796.0,945.0 1788.0,937.0" fill="#858ad8"/><polyline points="710.0,1274.6 728.0,1274.6 748.0,1285.0 766.0,1274.6 784.0,1262.8 802.0,1274.6 820.0,1262.8 840.0,1285.0 858.0,1274.6 876.0,1262.8 894.0,1274.6 912.0,1274.6 932.0,1262.8 950.0,1262.8 968.0,1274.6 986.0,1285.0 1004.0,1285.0 1024.0,1274.6 1042.0,1274.6 1060.0,1262.8 1078.0,1285.0 1096.0,1285.0 1116.0,1274.6 1134.0,1262.8 1152.0,1274.6 1170.0,1285.0 1188.0,1262.8 1208.0,1274.6 1226.0,1262.8 1244.0,1274.6 1262.0,1252.4 1280.0,1274.6 1300.0,1262.8 1318.0,1262.8 1336.0,1252.4 1354.0,1274.6 1372.0,1274.6 1392.0,1262.8 1410.0,1274.6 1428.0,1274.6 1446.0,1274.6 1464.0,1274.6 1484.0,1262.8 1502.0,1274.6 1520.0,1262.8 1538.0,1262.8 1556.0,1262.8 1576.0,1274.6 1594.0,1252.4 1612.0,1252.4 1630.0,1252.4 1648.0,1252.4 1668.0,1262.8 1686.0,1274.6 1704.0,1274.6 1722.0,1262.8 1740.0,1274.6 1760.0,1274.6 1778.0,1262.8 1796.0,1274.6" fill="none" stroke="#3071cd" stroke-width="4" stroke-linejoin="round"/><circle cx="710.0" cy="1274.6" r="8" fill="#3071cd"/><circle cx="728.0" cy="1274.6" r="8" fill="#3071cd"/><circle cx="748.0" cy="1285.0" r="8" fill="#3071cd"/><circle cx="766.0" cy="1274.6" r="8" fill="#3071cd"/><circle cx="784.0" cy="1262.8" r="8" fill="#3071cd"/><circle cx="802.0" cy="1274.6" r="8" fill="#3071cd"/><circle cx="820.0" cy="1262.8" r="8" fill="#3071cd"/><circle cx="840.0" cy="1285.0" r="8" fill="#3071cd"/><circle cx="858.0" cy="1274.6" r="8" fill="#3071cd"/><circle cx="876.0" cy="1262.8" r="8" fill="#3071cd"/><circle cx="894.0" cy="1274.6" r="8" fill="#3071cd"/><circle cx="912.0" cy="1274.6" r="8" fill="#3071cd"/><circle cx="932.0" cy="1262.8" r="8" fill="#3071cd"/><circle cx="950.0" cy="1262.8" r="8" fill="#3071cd"/><circle cx="968.0" cy="1274.6" r="8" fill="#3071cd"/><circle cx="986.0" cy="1285.0" r="8" fill="#3071cd"/><circle cx="1004.0" cy="1285.0" r="8" fill="#3071cd"/><circle cx="1024.0" cy="1274.6" r="8" fill="#3071cd"/><circle cx="1042.0" cy="1274.6" r="8" fill="#3071cd"/><circle cx="1060.0" cy="1262.8" r="8" fill="#3071cd"/><circle cx="1078.0" cy="1285.0" r="8" fill="#3071cd"/><circle cx="1096.0" cy="1285.0" r="8" fill="#3071cd"/><circle cx="1116.0" cy="1274.6" r="8" fill="#3071cd"/><circle cx="1134.0" cy="1262.8" r="8" fill="#3071cd"/><circle cx="1152.0" cy="1274.6" r="8" fill="#3071cd"/><circle cx="1170.0" cy="1285.0" r="8" fill="#3071cd"/><circle cx="1188.0" cy="1262.8" r="8" fill="#3071cd"/><circle cx="1208.0" cy="1274.6" r="8" fill="#3071cd"/><circle cx="1226.0" cy="1262.8" r="8" fill="#3071cd"/><circle cx="1244.0" cy="1274.6" r="8" fill="#3071cd"/><circle cx="1262.0" cy="1252.4" r="8" fill="#3071cd"/><circle cx="1280.0" cy="1274.6" r="8" fill="#3071cd"/><circle cx="1300.0" cy="1262.8" r="8" fill="#3071cd"/><circle cx="1318.0" cy="1262.8" r="8" fill="#3071cd"/><circle cx="1336.0" cy="1252.4" r="8" fill="#3071cd"/><circle cx="1354.0" cy="1274.6" r="8" fill="#3071cd"/><circle cx="1372.0" cy="1274.6" r="8" fill="#3071cd"/><circle cx="1392.0" cy="1262.8" r="8" fill="#3071cd"/><circle cx="1410.0" cy="1274.6" r="8" fill="#3071cd"/><circle cx="1428.0" cy="1274.6" r="8" fill="#3071cd"/><circle cx="1446.0" cy="1274.6" r="8" fill="#3071cd"/><circle cx="1464.0" cy="1274.6" r="8" fill="#3071cd"/><circle cx="1484.0" cy="1262.8" r="8" fill="#3071cd"/><circle cx="1502.0" cy="1274.6" r="8" fill="#3071cd"/><circle cx="1520.0" cy="1262.8" r="8" fill="#3071cd"/><circle cx="1538.0" cy="1262.8" r="8" fill="#3071cd"/><circle cx="1556.0" cy="1262.8" r="8" fill="#3071cd"/><circle cx="1576.0" cy="1274.6" r="8" fill="#3071cd"/><circle cx="1594.0" cy="1252.4" r="8" fill="#3071cd"/><circle cx="1612.0" cy="1252.4" r="8" fill="#3071cd"/><circle cx="1630.0" cy="1252.4" r="8" fill="#3071cd"/><circle cx="1648.0" cy="1252.4" r="8" fill="#3071cd"/><circle cx="1668.0" cy="1262.8" r="8" fill="#3071cd"/><circle cx="1686.0" cy="1274.6" r="8" fill="#3071cd"/><circle cx="1704.0" cy="1274.6" r="8" fill="#3071cd"/><circle cx="1722.0" cy="1262.8" r="8" fill="#3071cd"/><circle cx="1740.0" cy="1274.6" r="8" fill="#3071cd"/><circle cx="1760.0" cy="1274.6" r="8" fill="#3071cd"/><circle cx="1778.0" cy="1262.8" r="8" fill="#3071cd"/><circle cx="1796.0" cy="1274.6" r="8" fill="#3071cd"/></svg>
<div class="t" style="left:718.9px;top:1316.0px;font-size:23px;line-height:23px;color:#666666;letter-spacing:0.85px;transform-origin:0 0;transform:rotate(45deg)">Apr 7, 23, 09:07 AM</div>
<div class="t" style="left:829.3px;top:1316.0px;font-size:23px;line-height:23px;color:#666666;letter-spacing:0.85px;transform-origin:0 0;transform:rotate(45deg)">Apr 7, 23, 09:13 AM</div>
<div class="t" style="left:939.7px;top:1316.0px;font-size:23px;line-height:23px;color:#666666;letter-spacing:0.85px;transform-origin:0 0;transform:rotate(45deg)">Apr 7, 23, 09:19 AM</div>
<div class="t" style="left:1050.1px;top:1316.0px;font-size:23px;line-height:23px;color:#666666;letter-spacing:0.85px;transform-origin:0 0;transform:rotate(45deg)">Apr 7, 23, 09:25 AM</div>
<div class="t" style="left:1160.5px;top:1316.0px;font-size:23px;line-height:23px;color:#666666;letter-spacing:0.85px;transform-origin:0 0;transform:rotate(45deg)">Apr 7, 23, 09:31 AM</div>
<div class="t" style="left:1270.9px;top:1316.0px;font-size:23px;line-height:23px;color:#666666;letter-spacing:0.85px;transform-origin:0 0;transform:rotate(45deg)">Apr 7, 23, 09:37 AM</div>
<div class="t" style="left:1381.3px;top:1316.0px;font-size:23px;line-height:23px;color:#666666;letter-spacing:0.85px;transform-origin:0 0;transform:rotate(45deg)">Apr 7, 23, 09:43 AM</div>
<div class="t" style="left:1491.7px;top:1316.0px;font-size:23px;line-height:23px;color:#666666;letter-spacing:0.85px;transform-origin:0 0;transform:rotate(45deg)">Apr 7, 23, 09:49 AM</div>
<div class="t" style="left:1602.1px;top:1316.0px;font-size:23px;line-height:23px;color:#666666;letter-spacing:0.85px;transform-origin:0 0;transform:rotate(45deg)">Apr 7, 23, 09:55 AM</div>
<div class="t" style="left:1712.5px;top:1316.0px;font-size:23px;line-height:23px;color:#666666;letter-spacing:0.85px;transform-origin:0 0;transform:rotate(45deg)">Apr 7, 23, 10:01 AM</div>
<svg class="r" style="left:1120px;top:1530px;" width="40" height="26" viewBox="0 0 40 26"><path d="M2 13H34" stroke="#3071cd" stroke-width="4"/><circle cx="18" cy="13" r="8" fill="#3071cd"/></svg>
<div class="t " style="left:1164.50px;top:1530.68px;font-size:24px;line-height:24px;color:#333333;font-weight:700;transform-origin:0 20.32px;transform:scaleY(1.02);">CPU</div>
<svg class="r" style="left:1251px;top:1530px;" width="40" height="26" viewBox="0 0 40 26"><path d="M2 13H34" stroke="#858ad8" stroke-width="4"/><polygon points="18,4.5 26.5,13 18,21.5 9.5,13" fill="#858ad8"/></svg>
<div class="t " style="left:1296.20px;top:1530.68px;font-size:24px;line-height:24px;color:#333333;font-weight:700;transform-origin:0 20.32px;transform:scaleY(1.02);letter-spacing:0.9px">Memory</div>
<div class="t " style="left:1749.00px;top:1571.76px;font-size:18px;line-height:18px;color:#999999;font-weight:400;transform-origin:0 15.24px;transform:scaleY(1.02);letter-spacing:0.75px">Highcharts.com</div>
<div class="t " style="left:2051.00px;top:727.79px;font-size:28px;line-height:28px;color:#1f2633;font-weight:700;transform-origin:0 23.71px;transform:scaleY(1.02);">Available Worker Nodes</div>
<div class="r" style="left:2052px;top:893px;width:1442px;height:2px;background:#dfe2e7"></div>
<div class="r" style="left:2052px;top:895px;width:1442px;height:94px;background:#f8f9fc"></div>
<div class="r" style="left:2052px;top:989px;width:1442px;height:2px;background:#dfe2e7"></div>
<div class="t " style="left:2076.00px;top:831.49px;font-size:26px;line-height:26px;color:#677899;font-weight:700;transform-origin:0 22.01px;transform:scaleY(1.02);">Worker</div>
<div class="t " style="left:2558.00px;top:831.49px;font-size:26px;line-height:26px;color:#677899;font-weight:700;transform-origin:0 22.01px;transform:scaleY(1.02);">AMP</div>
<div class="t " style="left:3038.00px;top:831.49px;font-size:26px;line-height:26px;color:#677899;font-weight:700;transform-origin:0 22.01px;transform:scaleY(1.02);">Job Tags</div>
<div class="t " style="left:2087.50px;top:927.79px;font-size:26px;line-height:26px;color:#1c1c1c;font-weight:400;transform-origin:0 22.01px;transform:scaleY(1.02);">EC2AMAZ-B9KOBUR</div>
<svg class="r" style="left:2561px;top:929px;" width="30" height="26" viewBox="0 0 30 26"><path d="M3.5 14 L10.5 21 L26 5.5" fill="none" stroke="#1c1c1c" stroke-width="2.7" stroke-linecap="round" stroke-linejoin="round"/></svg>
<div class="t " style="left:3039.00px;top:927.79px;font-size:26px;line-height:26px;color:#1c1c1c;font-weight:400;transform-origin:0 22.01px;transform:scaleY(1.02);">AlteryxWorkerTag, MarcoWorkerTag</div>
</body></html>
